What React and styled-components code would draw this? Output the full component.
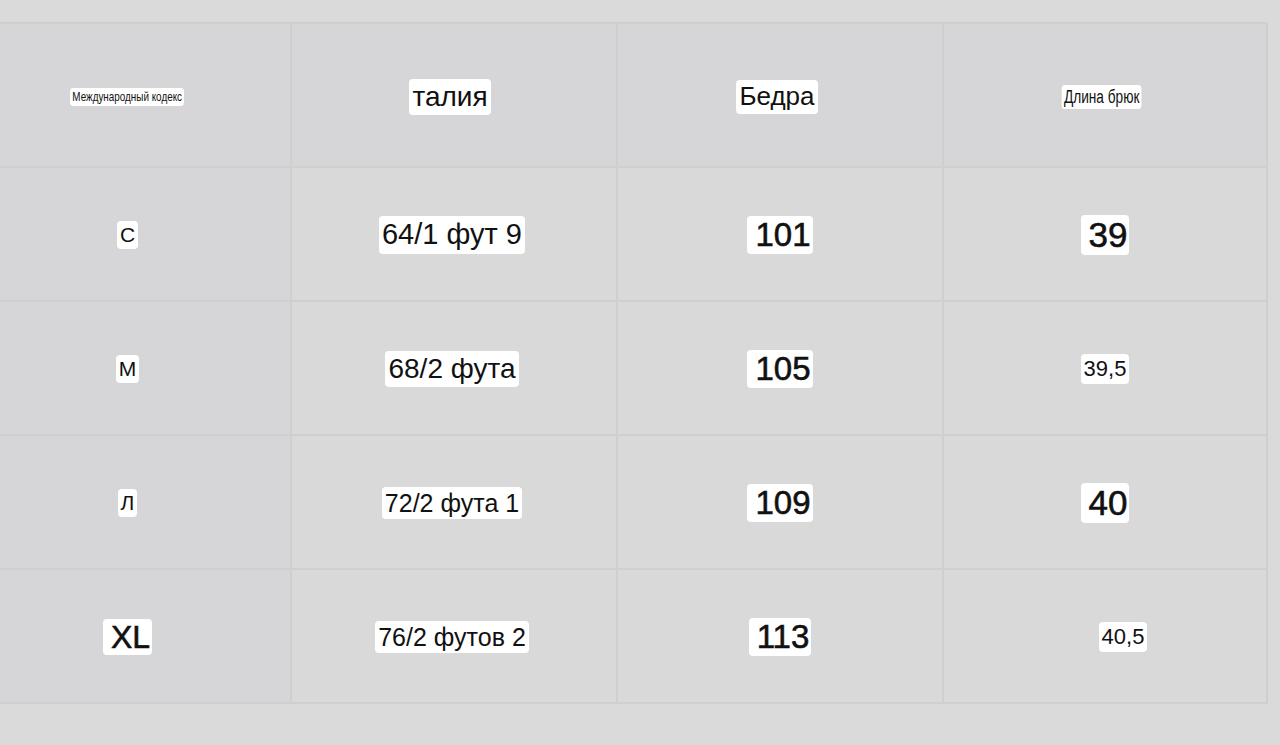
import React from "react";
import styled, { createGlobalStyle } from "styled-components";

const GlobalStyle = createGlobalStyle`
  html, body {
    margin: 0;
    padding: 0;
    background: #dadada;
  }
  body {
    font-family: "Liberation Sans", Arial, sans-serif;
    color: #111;
  }
`;

const Page = styled.div`
  width: 1280px;
  height: 745px;
  overflow: hidden;
  padding-top: 22px;
  box-sizing: border-box;
  background: #dadada;
`;

const Table = styled.div`
  display: grid;
  grid-template-columns: 325px 324px 324px 322px;
  grid-template-rows: 142px;
  grid-auto-rows: 132px;
  gap: 2px;
  padding: 2px;
  margin-left: -37px;
  width: max-content;
  background: #cfcfd0;
`;

const Cell = styled.div`
  display: flex;
  align-items: center;
  justify-content: center;
  padding-top: ${(p) => (p.$head ? 4 : 2)}px;
  background: ${(p) => (p.$dark ? "#d6d6d8" : "#d9d9d9")};
`;

const Label = styled.span`
  display: inline-block;
  background: #fff;
  border-radius: 4px;
  padding: ${(p) => (p.$num ? "0 2px 0 8px" : "2px 3px")};
  line-height: 1.15;
  white-space: nowrap;
  font-family: "Liberation Sans", Arial, sans-serif;
  font-size: ${(p) => p.$size}px;
  font-weight: 400;
  -webkit-text-stroke: ${(p) => (p.$num ? "0.6px #111" : "0")};
  transform: ${(p) => (p.$narrow ? `scaleX(${p.$narrow})` : "none")};
  margin-left: ${(p) => p.$shift || 0}px;
`;

const header = [
  { text: "Международный кодекс", size: 13, narrow: 0.76 },
  { text: "талия", size: 28, shift: -8 },
  { text: "Бедра", size: 26, shift: -6 },
  { text: "Длина брюк", size: 18, narrow: 0.76, shift: -6 },
];

const rows = [
  [
    { text: "С", size: 21 },
    { text: "64/1 фут 9", size: 29, shift: -4 },
    { text: "101", size: 33, num: true },
    { text: "39", size: 35, num: true },
  ],
  [
    { text: "М", size: 21 },
    { text: "68/2 фута", size: 28, shift: -4 },
    { text: "105", size: 33, num: true },
    { text: "39,5", size: 22 },
  ],
  [
    { text: "Л", size: 21 },
    { text: "72/2 фута 1", size: 25, shift: -4 },
    { text: "109", size: 33, num: true },
    { text: "40", size: 35, num: true },
  ],
  [
    { text: "XL", size: 32, num: true },
    { text: "76/2 футов 2", size: 25, shift: -4 },
    { text: "113", size: 33, num: true },
    { text: "40,5", size: 22, shift: 36 },
  ],
];

function SizeCell({ item, dark, head }) {
  return (
    <Cell $dark={dark} $head={head}>
      <Label
        $size={item.size}
        $num={item.num}
        $narrow={item.narrow}
        $shift={item.shift}
      >
        {item.text}
      </Label>
    </Cell>
  );
}

export default function App() {
  return (
    <Page>
      <GlobalStyle />
      <Table>
        {header.map((item) => (
          <SizeCell key={item.text} item={item} dark head />
        ))}
        {rows.map((row, r) =>
          row.map((item, c) => (
            <SizeCell key={`${r}-${c}`} item={item} dark={c === 0} />
          ))
        )}
      </Table>
    </Page>
  );
}
